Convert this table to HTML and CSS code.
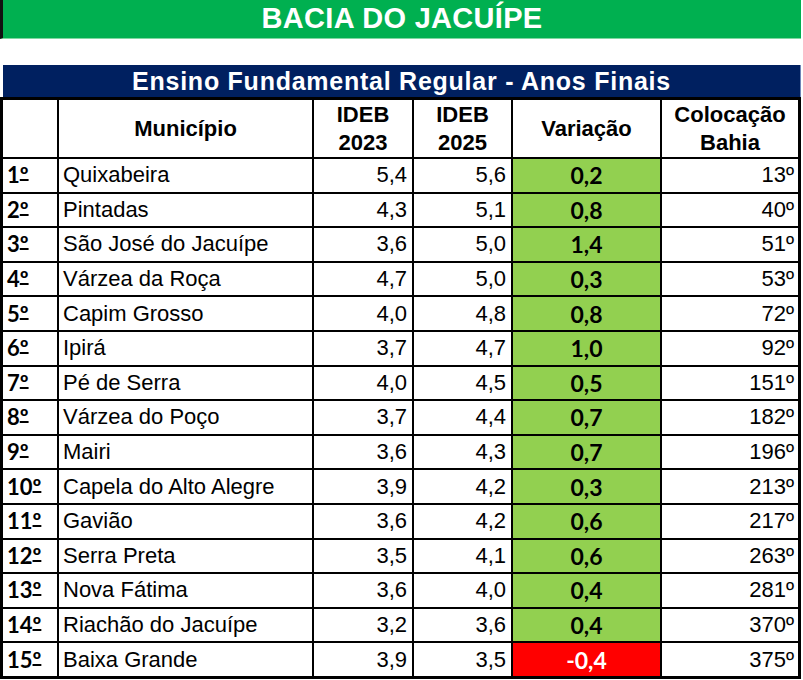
FILE: index.html
```html
<!DOCTYPE html>
<html lang="pt-BR">
<head>
<meta charset="utf-8">
<title>Bacia do Jacuípe - IDEB</title>
<link rel="stylesheet" href="styles.css">
</head>
<body>
<div class="page">
  <div class="banner">BACIA DO JACUÍPE</div>
  <div class="subtitle">Ensino Fundamental Regular - Anos Finais</div>
  <table class="ideb">
    <colgroup>
      <col class="c-rank"><col class="c-mun"><col class="c-i23"><col class="c-i25"><col class="c-var"><col class="c-col">
    </colgroup>
    <thead>
      <tr>
        <th></th>
        <th>Município</th>
        <th>IDEB<br>2023</th>
        <th>IDEB<br>2025</th>
        <th>Variação</th>
        <th class="last">Colocação<br>Bahia</th>
      </tr>
    </thead>
    <tbody>
      <tr><td class="rank">1<u>º</u></td><td class="mun">Quixabeira</td><td class="num">5,4</td><td class="num">5,6</td><td class="var up">0,2</td><td class="pos">13º</td></tr>
      <tr><td class="rank">2<u>º</u></td><td class="mun">Pintadas</td><td class="num">4,3</td><td class="num">5,1</td><td class="var up">0,8</td><td class="pos">40º</td></tr>
      <tr><td class="rank">3<u>º</u></td><td class="mun">São José do Jacuípe</td><td class="num">3,6</td><td class="num">5,0</td><td class="var up">1,4</td><td class="pos">51º</td></tr>
      <tr><td class="rank">4<u>º</u></td><td class="mun">Várzea da Roça</td><td class="num">4,7</td><td class="num">5,0</td><td class="var up">0,3</td><td class="pos">53º</td></tr>
      <tr><td class="rank">5<u>º</u></td><td class="mun">Capim Grosso</td><td class="num">4,0</td><td class="num">4,8</td><td class="var up">0,8</td><td class="pos">72º</td></tr>
      <tr><td class="rank">6<u>º</u></td><td class="mun">Ipirá</td><td class="num">3,7</td><td class="num">4,7</td><td class="var up">1,0</td><td class="pos">92º</td></tr>
      <tr><td class="rank">7<u>º</u></td><td class="mun">Pé de Serra</td><td class="num">4,0</td><td class="num">4,5</td><td class="var up">0,5</td><td class="pos">151º</td></tr>
      <tr><td class="rank">8<u>º</u></td><td class="mun">Várzea do Poço</td><td class="num">3,7</td><td class="num">4,4</td><td class="var up">0,7</td><td class="pos">182º</td></tr>
      <tr><td class="rank">9<u>º</u></td><td class="mun">Mairi</td><td class="num">3,6</td><td class="num">4,3</td><td class="var up">0,7</td><td class="pos">196º</td></tr>
      <tr><td class="rank">10<u>º</u></td><td class="mun">Capela do Alto Alegre</td><td class="num">3,9</td><td class="num">4,2</td><td class="var up">0,3</td><td class="pos">213º</td></tr>
      <tr><td class="rank">11<u>º</u></td><td class="mun">Gavião</td><td class="num">3,6</td><td class="num">4,2</td><td class="var up">0,6</td><td class="pos">217º</td></tr>
      <tr><td class="rank">12<u>º</u></td><td class="mun">Serra Preta</td><td class="num">3,5</td><td class="num">4,1</td><td class="var up">0,6</td><td class="pos">263º</td></tr>
      <tr><td class="rank">13<u>º</u></td><td class="mun">Nova Fátima</td><td class="num">3,6</td><td class="num">4,0</td><td class="var up">0,4</td><td class="pos">281º</td></tr>
      <tr><td class="rank">14<u>º</u></td><td class="mun">Riachão do Jacuípe</td><td class="num">3,2</td><td class="num">3,6</td><td class="var up">0,4</td><td class="pos">370º</td></tr>
      <tr class="end"><td class="rank">15<u>º</u></td><td class="mun">Baixa Grande</td><td class="num">3,9</td><td class="num">3,5</td><td class="var down">-0,4</td><td class="pos">375º</td></tr>
    </tbody>
  </table>
</div>
</body>
</html>
```
FILE: styles.css
```css
html, body {
  margin: 0;
  padding: 0;
  background: #ffffff;
}

.page {
  width: 803px;
  font-family: "Liberation Sans", Arial, sans-serif;
  color: #000000;
}

.banner {
  box-sizing: border-box;
  width: 801px;
  height: 39px;
  background: #00b050;
  border-left: 3px solid #111111;
  border-bottom: 1px solid #7fd8a0;
  color: #ffffff;
  font-weight: bold;
  font-size: 29px;
  letter-spacing: 0.3px;
  line-height: 37px;
  text-align: center;
}

.subtitle {
  box-sizing: border-box;
  margin: 26px 0 0 3px;
  width: 798px;
  height: 32px;
  background: #002060;
  border-right: 1px solid #6f86b8;
  color: #ffffff;
  font-weight: bold;
  font-size: 25px;
  letter-spacing: 0.75px;
  line-height: 32px;
  text-align: center;
}

.ideb {
  box-sizing: border-box;
  width: 801px;
  table-layout: fixed;
  border-collapse: separate;
  border-spacing: 0;
  border: 3px solid #000000;
  font-size: 22px;
}

.c-rank { width: 56px; }
.c-mun { width: 255px; }
.c-i23 { width: 100px; }
.c-i25 { width: 99px; }
.c-var { width: 149px; }
.c-col { width: 136px; }

.ideb th,
.ideb td {
  box-sizing: border-box;
  padding: 0;
  border-right: 2px solid #000000;
  border-bottom: 2px solid #000000;
  white-space: nowrap;
  overflow: hidden;
}

.ideb th:last-child,
.ideb td:last-child {
  border-right: none;
}

.ideb tr.end td {
  border-bottom: none;
}

.ideb thead tr {
  height: 58px;
}

.ideb th {
  font-weight: bold;
  font-size: 22px;
  line-height: 28px;
  text-align: center;
  vertical-align: middle;
  padding-top: 1px;
}

.ideb tbody tr {
  height: 34.6px;
}

.ideb tbody tr.end {
  height: 32.6px;
}

.ideb td {
  line-height: 30px;
  vertical-align: middle;
}

.rank {
  font-family: Lato, "Open Sans", sans-serif;
  font-weight: bold;
  font-size: 22px;
  padding-left: 4px !important;
  text-align: left;
}

.rank u {
  text-decoration-thickness: 2px;
  text-underline-offset: -4px;
}

.mun {
  padding-left: 4px !important;
  text-align: left;
}

.num {
  text-align: right;
  padding-right: 5px !important;
}

.var {
  font-family: Lato, "Open Sans", sans-serif;
  font-weight: bold;
  font-size: 23px;
  text-align: center;
}

.var.up {
  background: #92d050;
}

.var.down {
  background: #ff0000;
  color: #ffffff;
}

.pos {
  text-align: right;
  padding-right: 4px !important;
}
```
